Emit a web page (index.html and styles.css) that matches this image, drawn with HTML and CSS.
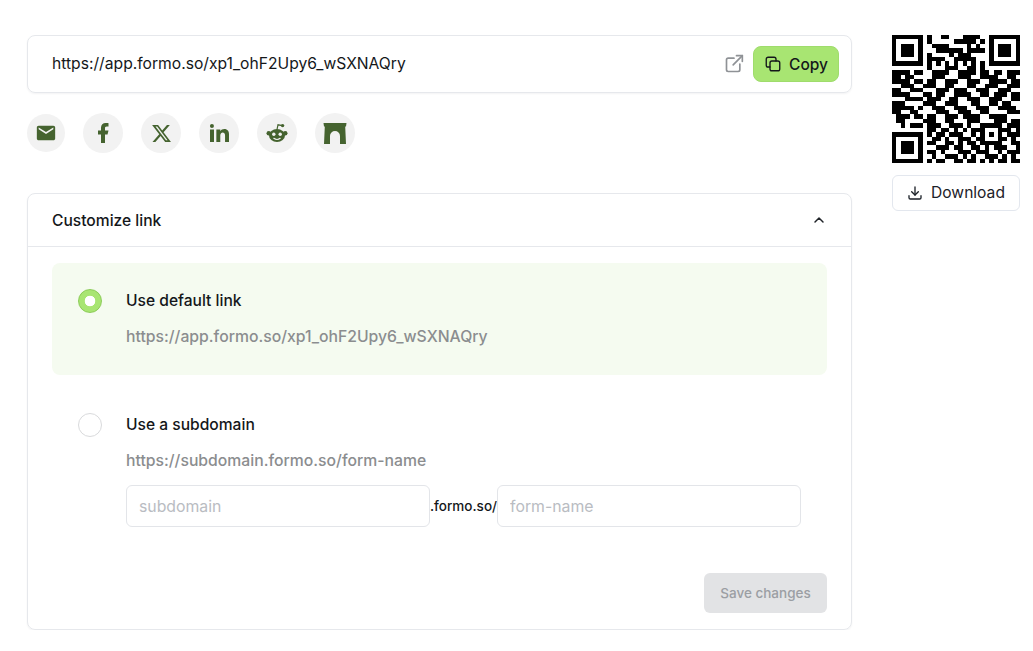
FILE: index.html
```html
<!DOCTYPE html>
<html lang="en">
<head>
<meta charset="utf-8">
<title>Share link</title>
<link rel="stylesheet" href="styles.css">
</head>
<body>
<main class="page">
  <section class="main">
    <div class="linkbar">
      <span class="linkbar-url">https://app.formo.so/xp1_ohF2Upy6_wSXNAQry</span>
      <svg class="open-icon" viewBox="0 0 24 24" width="24" height="24" fill="none" stroke="currentColor" stroke-width="2" stroke-linecap="round" stroke-linejoin="round"><path d="M12 5H5a2 2 0 0 0-2 2v12a2 2 0 0 0 2 2h12a2 2 0 0 0 2-2v-7"/><path d="M11 13L22 2"/><path d="M15 2h7v7"/></svg>
      <button class="copy-btn" type="button">
        <svg viewBox="0 0 24 24" width="18" height="18" fill="none" stroke="currentColor" stroke-width="1.800" stroke-linecap="round" stroke-linejoin="round"><rect x="8" y="8" width="13" height="13" rx="2.500"/><path d="M16 8V5.500A2.500 2.500 0 0 0 13.500 3h-8A2.500 2.500 0 0 0 3 5.500v8A2.500 2.500 0 0 0 5.500 16H8"/></svg>
        Copy
      </button>
    </div>

    <div class="socials">
      <a class="social social-sm"><svg viewBox="0 0 24 24" width="22" height="22" fill="currentColor"><path d="M20 4H4c-1.100 0-2 .9-2 2v12c0 1.100.9 2 2 2h16c1.100 0 2-.9 2-2V6c0-1.100-.9-2-2-2zm0 4l-8 5-8-5V6l8 5 8-5v2z"/></svg></a>
      <a class="social"><svg viewBox="0 0 24 24" width="24" height="24" fill="currentColor"><path d="M14 13.500h2.500l1-4H14v-2c0-1.030 0-2 2-2h1.500V2.140c-.326-.043-1.557-.14-2.857-.14C11.928 2 10 3.657 10 6.700v2.800H7v4h3V22h4v-8.500z"/></svg></a>
      <a class="social"><svg viewBox="0 0 24 24" width="21" height="21" fill="currentColor"><path d="M18.244 2.250h3.308l-7.227 8.260 8.502 11.240H16.170l-5.214-6.817L4.990 21.750H1.680l7.730-8.835L1.254 2.250H8.080l4.713 6.231zm-1.161 17.520h1.833L7.084 4.126H5.117z"/></svg></a>
      <a class="social"><svg viewBox="0 0 24 24" width="24" height="24" fill="currentColor"><path d="M6.940 5a2 2 0 1 1-4-.002 2 2 0 0 1 4 .002zM7 8.480H3V21h4V8.480zm6.320 0H9.340V21h3.940v-6.570c0-3.660 4.770-4 4.770 0V21H22v-7.930c0-6.170-7.060-5.940-8.720-2.910l.04-1.680z"/></svg></a>
      <a class="social"><svg viewBox="0 0 24 24" width="24" height="24"><g fill="currentColor"><ellipse cx="12" cy="14.500" rx="8" ry="6.500"/><circle cx="3.800" cy="12.200" r="2.300"/><circle cx="20.200" cy="12.200" r="2.300"/><circle cx="17.600" cy="4.600" r="1.700"/></g><path d="M12 8.500L13 3.800l4.500.8" fill="none" stroke="currentColor" stroke-width="1.200"/><circle cx="8.800" cy="13.300" r="1.700" fill="#f2f2f2"/><circle cx="15.200" cy="13.300" r="1.700" fill="#f2f2f2"/><path d="M8.800 17.300c1.800 1.300 4.600 1.300 6.400 0" fill="none" stroke="#f2f2f2" stroke-width="1.100" stroke-linecap="round"/></svg></a>
      <a class="social"><svg viewBox="0 0 24 21" width="24" height="21" fill="currentColor"><path d="M.5 0h23L23 3.500h-.8L23 21h-6V13a5 5 0 0 0-10 0v8H1l.8-17.500H1z"/></svg></a>
    </div>

    <section class="card">
      <header class="card-head">
        <h2 class="card-title">Customize link</h2>
        <svg viewBox="0 0 24 24" width="16" height="16" fill="none" stroke="#1f2328" stroke-width="2.200" stroke-linecap="round" stroke-linejoin="round"><path d="M6 15l6-6 6 6"/></svg>
      </header>
      <div class="card-body">
        <div class="option option-active">
          <span class="radio radio-on"></span>
          <div class="option-main">
            <div class="option-label">Use default link</div>
            <div class="option-url">https://app.formo.so/xp1_ohF2Upy6_wSXNAQry</div>
          </div>
        </div>
        <div class="option option-sub">
          <span class="radio"></span>
          <div class="option-main">
            <div class="option-label">Use a subdomain</div>
            <div class="option-url">https://subdomain.formo.so/form-name</div>
            <div class="fields">
              <input class="field" type="text" placeholder="subdomain">
              <span class="field-sep">.formo.so/</span>
              <input class="field" type="text" placeholder="form-name">
            </div>
          </div>
        </div>
        <div class="actions">
          <button class="save-btn" type="button">Save changes</button>
        </div>
      </div>
    </section>
  </section>

  <aside class="side">
    <svg class="qr" viewBox="0 0 29 29" width="128" height="128" fill="none" stroke="#000" stroke-width="1" shape-rendering="crispEdges"><path d="M0 .5h7M8 .5h1M11 .5h2M16 .5h4M22 .5h7M0 1.500h1M6 1.500h1M8 1.500h1M14 1.500h5M20 1.500h1M22 1.500h1M28 1.500h1M0 2.500h1M2 2.500h3M6 2.500h1M9 2.500h4M17 2.500h1M19 2.500h1M22 2.500h1M24 2.500h3M28 2.500h1M0 3.500h1M2 3.500h3M6 3.500h1M10 3.500h6M17 3.500h4M22 3.500h1M24 3.500h3M28 3.500h1M0 4.500h1M2 4.500h3M6 4.500h1M8 4.500h1M13 4.500h1M15 4.500h3M22 4.500h1M24 4.500h3M28 4.500h1M0 5.500h1M6 5.500h1M8 5.500h4M14 5.500h5M22 5.500h1M28 5.500h1M0 6.500h7M8 6.500h1M10 6.500h1M12 6.500h1M14 6.500h1M16 6.500h1M18 6.500h1M20 6.500h1M22 6.500h7M8 7.500h1M12 7.500h3M17 7.500h2M20 7.500h1M0 8.500h4M5 8.500h2M9 8.500h4M15 8.500h4M20 8.500h2M23 8.500h2M26 8.500h3M0 9.500h2M3 9.500h2M9 9.500h3M15 9.500h3M20 9.500h4M26 9.500h2M0 10.500h4M5 10.500h2M8 10.500h2M12 10.500h3M17 10.500h3M22 10.500h4M27 10.500h2M2 11.500h3M7 11.500h3M12 11.500h2M17 11.500h2M21 11.500h3M26 11.500h3M0 12.500h2M4 12.500h3M10 12.500h3M14 12.500h3M19 12.500h3M24 12.500h3M0 13.500h4M7 13.500h2M10 13.500h2M14 13.500h4M20 13.500h2M23 13.500h3M27 13.500h2M3 14.500h4M8 14.500h3M13 14.500h2M17 14.500h3M22 14.500h3M27 14.500h2M0 15.500h3M7 15.500h3M12 15.500h3M18 15.500h2M22 15.500h2M25 15.500h2M0 16.500h5M6 16.500h1M9 16.500h3M14 16.500h3M19 16.500h3M24 16.500h4M0 17.500h2M4 17.500h2M10 17.500h3M15 17.500h3M20 17.500h2M26 17.500h3M1 18.500h3M5 18.500h2M8 18.500h2M12 18.500h3M16 18.500h4M22 18.500h4M1 19.500h2M7 19.500h3M12 19.500h2M17 19.500h3M23 19.500h3M27 19.500h2M2 20.500h1M4 20.500h3M8 20.500h3M13 20.500h3M17 20.500h1M20 20.500h5M26 20.500h3M8 21.500h2M11 21.500h2M14 21.500h1M16 21.500h1M18 21.500h3M24 21.500h3M28 21.500h1M0 22.500h7M8 22.500h1M10 22.500h2M13 22.500h3M18 22.500h1M20 22.500h1M22 22.500h1M24 22.500h1M26 22.500h3M0 23.500h1M6 23.500h1M9 23.500h2M12 23.500h1M15 23.500h3M19 23.500h2M24 23.500h2M27 23.500h1M0 24.500h1M2 24.500h3M6 24.500h1M8 24.500h2M12 24.500h2M15 24.500h1M17 24.500h2M20 24.500h5M27 24.500h2M0 25.500h1M2 25.500h3M6 25.500h1M10 25.500h3M14 25.500h2M18 25.500h2M21 25.500h1M23 25.500h3M28 25.500h1M0 26.500h1M2 26.500h3M6 26.500h1M8 26.500h2M11 26.500h1M15 26.500h3M19 26.500h3M24 26.500h1M26 26.500h3M0 27.500h1M6 27.500h1M9 27.500h1M12 27.500h3M16 27.500h1M18 27.500h1M21 27.500h3M25 27.500h1M27 27.500h1M0 28.500h7M8 28.500h1M10 28.500h2M14 28.500h2M17 28.500h2M20 28.500h1M22 28.500h1M24 28.500h2M27 28.500h2"/></svg>
    <button class="download-btn" type="button">
      <svg viewBox="0 0 24 24" width="16" height="16" fill="none" stroke="currentColor" stroke-width="2" stroke-linecap="round" stroke-linejoin="round"><path d="M3 16v3a2 2 0 0 0 2 2h14a2 2 0 0 0 2-2v-3"/><path d="M7 10l5 5 5-5"/><path d="M12 3v12"/></svg>
      Download
    </button>
  </aside>
</main>
</body>
</html>
```

FILE: styles.css
```css
* { box-sizing: border-box; }

html, body {
  margin: 0;
  padding: 0;
  background: #fff;
}

body {
  font-family: "Inter", "Liberation Sans", sans-serif;
  color: #14171a;
  overflow: hidden;
}

.page {
  display: flex;
  align-items: flex-start;
  gap: 40px;
  padding: 35px 13px 0 27px;
}

.main {
  display: flex;
  flex-direction: column;
  width: 825px;
  flex: none;
}

.linkbar {
  display: flex;
  align-items: center;
  height: 58px;
  padding: 0 12px 0 24px;
  border: 1px solid #e6e8ec;
  border-radius: 8px;
  box-shadow: 0 1px 2px rgba(16, 24, 40, .05);
}

.linkbar-url {
  flex: 1;
  padding-bottom: 1px;
  font-size: 15.66px;
}

.open-icon {
  width: 20px;
  height: 20px;
  color: #8f9296;
  margin-right: 9px;
}

.copy-btn {
  display: flex;
  align-items: center;
  justify-content: center;
  gap: 7px;
  width: 86px;
  height: 36px;
  padding: 0;
  border: 1px solid #9fdc6c;
  border-radius: 8px;
  background: #a8e572;
  color: #14171a;
  font: 500 15.5px "Inter", sans-serif;
}

.socials {
  display: flex;
  align-items: center;
  gap: 18px;
  margin-top: 20px;
}

.social {
  display: flex;
  align-items: center;
  justify-content: center;
  width: 40px;
  height: 40px;
  border-radius: 50%;
  background: #f2f2f2;
  color: #45632f;
}

.social-sm {
  width: 38px;
  height: 38px;
}

.card {
  margin-top: 40px;
  border: 1px solid #e6e8ec;
  border-radius: 8px;
  box-shadow: 0 1px 2px rgba(16, 24, 40, .05);
}

.card-head {
  display: flex;
  align-items: center;
  justify-content: space-between;
  height: 53px;
  padding: 0 24px;
  border-bottom: 1px solid #e6e8ec;
}

.card-title {
  margin: 0;
  font-size: 15.6px;
  font-weight: 500;
}

.card-body {
  display: flex;
  flex-direction: column;
  padding: 16px 24px;
}

.option {
  display: flex;
  gap: 24px;
  padding: 26px 26px 25px;
  border-radius: 8px;
}

.option-active {
  height: 112px;
  background: #f5fbf0;
}

.option-sub {
  padding-top: 38px;
  padding-bottom: 0;
}

.radio {
  flex: none;
  width: 24px;
  height: 24px;
  border: 1px solid #d9dadc;
  border-radius: 50%;
  background: #fff;
}

.radio-on {
  border-color: #8ccc58;
  background: radial-gradient(circle, #fff 5px, #a8e572 5.6px);
}

.option-main {
  flex: 1;
  min-width: 0;
}

.option-label {
  font-size: 15.6px;
  font-weight: 500;
  line-height: 24px;
}

.option-url {
  margin-top: 12px;
  font-size: 15.75px;
  font-weight: 500;
  line-height: 24px;
  color: #8b8d8f;
}

.fields {
  display: flex;
  align-items: center;
  margin-top: 12px;
}

.field {
  flex: 1;
  min-width: 0;
  height: 42px;
  padding: 0 12px;
  border: 1px solid #e3e5e9;
  border-radius: 6px;
  font: 400 15.8px "Inter", sans-serif;
  outline: none;
}

.field::placeholder {
  color: #b9bcc2;
}

.field-sep {
  font-size: 13.5px;
  font-weight: 500;
}

.actions {
  display: flex;
  justify-content: flex-end;
  margin-top: 46px;
}

.save-btn {
  width: 123px;
  height: 40px;
  padding: 0;
  border: none;
  border-radius: 6px;
  background: #e2e3e5;
  color: #9b9ea3;
  font: 500 13.5px "Inter", sans-serif;
}

.side {
  display: flex;
  flex-direction: column;
  gap: 12px;
  width: 128px;
  flex: none;
}

.qr {
  display: block;
}

.download-btn {
  display: flex;
  align-items: center;
  justify-content: center;
  gap: 8px;
  width: 128px;
  height: 36px;
  padding: 0 0 1px;
  border: 1px solid #e3e7ee;
  border-radius: 6px;
  background: #fff;
  color: #1c2128;
  font: 400 15.6px "Inter", sans-serif;
}
```
